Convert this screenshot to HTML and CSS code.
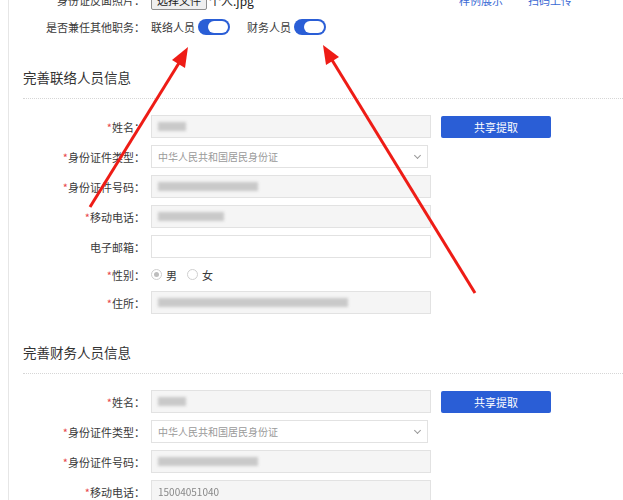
FILE: index.html
```html
<!DOCTYPE html>
<html lang="zh-CN">
<head>
  <meta charset="UTF-8">
  <meta name="viewport" content="width=device-width, initial-scale=1.0">
  <title>完善人员信息</title>
  <link rel="stylesheet" href="styles.css">
</head>
<body>

  <div class="page">
    <div class="line top-line">
      <span class="label"><i>*</i>身份证反面照片：</span>
      <span class="file-pick"><span class="file-btn">选择文件</span> 个人.jpg</span>
      <span class="links"><a href="#">样例展示</a><a href="#">扫码上传</a></span>
    </div>

    <div class="line role-line">
      <span class="label">是否兼任其他职务：</span>
      <span class="roles">
        <span class="role">联络人员 <span class="switch"><span class="knob"></span></span></span>
        <span class="role">财务人员 <span class="switch"><span class="knob"></span></span></span>
      </span>
    </div>

    <div class="block">
      <h3 class="block-title">完善联络人员信息</h3>
      <div class="form">
        <span class="label"><i>*</i>姓名：</span>
        <div class="field grey"><span class="blur" style="width: 28px"></span></div>
        <button class="btn">共享提取</button>

        <span class="label"><i>*</i>身份证件类型：</span>
        <div class="field select">中华人民共和国居民身份证<span class="caret"></span></div>
        <span></span>

        <span class="label"><i>*</i>身份证件号码：</span>
        <div class="field grey"><span class="blur" style="width: 100px"></span></div>
        <span></span>

        <span class="label"><i>*</i>移动电话：</span>
        <div class="field grey"><span class="blur" style="width: 66px"></span></div>
        <span></span>

        <span class="label">电子邮箱：</span>
        <div class="field"></div>
        <span></span>

        <span class="label"><i>*</i>性别：</span>
        <div class="radios">
          <span class="radio checked"></span>男
          <span class="radio"></span>女
        </div>
        <span></span>

        <span class="label"><i>*</i>住所：</span>
        <div class="field grey"><span class="blur" style="width: 190px"></span></div>
        <span></span>
      </div>
    </div>

    <div class="block">
      <h3 class="block-title">完善财务人员信息</h3>
      <div class="form">
        <span class="label"><i>*</i>姓名：</span>
        <div class="field grey"><span class="blur" style="width: 28px"></span></div>
        <button class="btn">共享提取</button>

        <span class="label"><i>*</i>身份证件类型：</span>
        <div class="field select">中华人民共和国居民身份证<span class="caret"></span></div>
        <span></span>

        <span class="label"><i>*</i>身份证件号码：</span>
        <div class="field grey"><span class="blur" style="width: 100px"></span></div>
        <span></span>

        <span class="label"><i>*</i>移动电话：</span>
        <div class="field grey"><span class="phone">15004051040</span></div>
        <span></span>
      </div>
    </div>
  </div>

  <!-- red arrows drawn over the screenshot -->
  <svg class="marks" viewBox="0 0 623 500" width="623" height="500">
    <g fill="#ee1c16" stroke="#ee1c16">
      <line x1="90" y1="207" x2="179" y2="63" stroke-width="3"/>
      <polygon points="188,47 185,68 172,60" stroke="none"/>
      <line x1="475" y1="293" x2="332" y2="60" stroke-width="3"/>
      <polygon points="323,45 339,57 326,65" stroke="none"/>
    </g>
  </svg>

</body>
</html>
```

FILE: styles.css
```css
body {
  margin: 0;
  background-color: white;
  font-family: "Noto Sans CJK SC", "Noto Sans", sans-serif;
  font-size: 11px;
  color: #3a3a3a;
  position: relative;
  height: 500px;
  overflow: hidden;
}

.page {
  margin-left: 8px;
  border-left: 1px solid #e6e6e6;
  padding-left: 14px;
  height: 520px;
}

.label {
  text-align: right;
  white-space: nowrap;
}

.label i {
  font-style: normal;
  color: #e8474a;
}

/* rows above the sections */
.line {
  display: grid;
  grid-template-columns: 122px 280px 1fr;
  column-gap: 6px;
  align-items: center;
  height: 22px;
}

.top-line {
  margin-top: -11px;
}

.role-line {
  margin-top: 5px;
}

.file-pick {
  font-size: 12px;
  color: #222;
  display: flex;
  align-items: center;
  gap: 2px;
}

.file-btn {
  display: inline-block;
  padding: 1px 5px;
  background-color: #efefef;
  border: 1px solid #8f8f8f;
  border-radius: 2px;
  font-size: 11px;
}

.links {
  padding-left: 22px;
  display: flex;
  gap: 25px;
}

.links a {
  color: #3a6ad4;
  text-decoration: none;
}

.roles {
  display: flex;
  gap: 17px;
}

.role {
  display: flex;
  align-items: center;
  gap: 3px;
}

.switch {
  width: 32px;
  height: 16px;
  border-radius: 8px;
  background-color: #2a5ed6;
  display: flex;
  justify-content: flex-end;
  align-items: center;
  padding: 0 2px;
  box-sizing: border-box;
}

.knob {
  width: 20px;
  height: 12px;
  border-radius: 6px;
  background-color: white;
}

/* sections */
.block {
  margin-top: 29px;
}

.block + .block {
  margin-top: 28px;
}

.block-title {
  margin: 0;
  font-size: 13.5px;
  font-weight: normal;
  line-height: 20px;
  color: #333;
  padding-bottom: 11px;
  border-bottom: 1px dotted #d6d6d6;
}

.form {
  display: grid;
  grid-template-columns: 122px 280px 114px;
  column-gap: 6px;
  row-gap: 7px;
  margin-top: 16px;
  align-items: center;
}

.form .btn {
  margin-left: 4px;
}

.field {
  height: 23px;
  border: 1px solid #e2e2e2;
  background-color: white;
  box-sizing: border-box;
  display: flex;
  align-items: center;
  padding-left: 6px;
  position: relative;
  font-size: 10px;
  color: #9a9a9a;
}

.field.grey {
  background-color: #f5f5f5;
}

.field.select {
  width: 277px;
}

.caret {
  position: absolute;
  right: 7px;
  top: 7px;
  width: 4px;
  height: 4px;
  border-right: 1px solid #999;
  border-bottom: 1px solid #999;
  transform: rotate(45deg);
}

.blur {
  display: block;
  height: 9px;
  background-color: #c9c9c9;
  filter: blur(1.5px);
}

.phone {
  color: #888;
  filter: blur(0.6px);
}

.btn {
  height: 22px;
  border: none;
  border-radius: 2px;
  background-color: #2a5ed6;
  color: white;
  font-family: inherit;
  font-size: 11px;
  cursor: pointer;
}

.radios {
  height: 19px;
  display: flex;
  align-items: center;
  font-size: 11px;
}

.radio {
  width: 9px;
  height: 9px;
  border: 1px solid #cfcfcf;
  border-radius: 50%;
  margin-right: 4px;
  box-sizing: content-box;
  position: relative;
}

.radios .radio:last-child {
  margin-left: 10px;
}

.radio.checked::after {
  content: "";
  position: absolute;
  left: 2px;
  top: 2px;
  width: 5px;
  height: 5px;
  border-radius: 50%;
  background-color: #bdbdbd;
}

.marks {
  position: absolute;
  left: 0;
  top: 0;
  pointer-events: none;
}
```
